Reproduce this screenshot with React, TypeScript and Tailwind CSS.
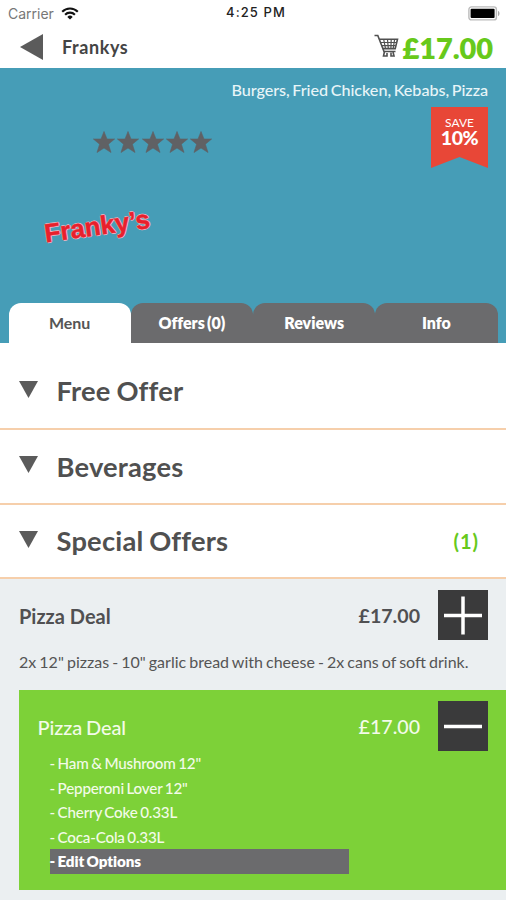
const TABS = ['Menu', 'Offers (0)', 'Reviews', 'Info']

const CATEGORIES = [
  { name: 'Free Offer', row: 'h-[87px] pt-[11px]' },
  { name: 'Beverages', row: 'h-[75px]' },
  { name: 'Special Offers', row: 'h-[74px]', count: 1 },
]

const OPTIONS = ['Ham & Mushroom 12"', 'Pepperoni Lover 12"', 'Cherry Coke 0.33L', 'Coca-Cola 0.33L']

function StatusBar() {
  return (
    <div className="grid h-[25px] grid-cols-3 items-center pl-2 pr-[5px] pt-px font-['Inter',sans-serif] text-[13px]">
      <div className="flex items-center gap-[7px]">
        <span className="text-[14px] text-[#777]">Carrier</span>
        <svg width="18" height="13" viewBox="0 0 18 13" fill="none" stroke="#111" strokeWidth="2.1">
          <path d="M1.2 4.7a11 11 0 0 1 15.6 0" />
          <path d="M4.1 7.7a6.9 6.9 0 0 1 9.8 0" />
          <path d="M9 12.6 6.3 9.9a3.8 3.8 0 0 1 5.4 0z" fill="#111" stroke="none" />
        </svg>
      </div>
      <span className="pl-[3px] text-center font-medium tracking-[1.1px] text-[#222]">4:25 PM</span>
      <svg className="justify-self-end" width="33" height="15" viewBox="0 0 33 15">
        <rect x="0.9" y="0.9" width="27.5" height="13" rx="2.5" fill="#fff" stroke="#bbb" strokeWidth="1.4" />
        <rect x="2.6" y="2.8" width="24" height="9.2" rx="1" fill="#000" />
        <path d="M30 5v5c2-.6 2-4.4 0-5z" fill="#aaa" />
      </svg>
    </div>
  )
}

function CartIcon() {
  return (
    <svg width="25" height="25" viewBox="0 0 25 25" fill="none" stroke="#505050" strokeWidth="1.6">
      <path d="M0.5 1.5h3.3l6.200 16h11.5" />
      <path d="M5.2 5.3h18.3l-2.3 9.300H8.8" />
      <path d="M6.5 8.5h16M7.600 11.600h14M9.700 5.500l1.800 9M13.500 5.500l.8 9M17.200 5.500l-.3 9M20.600 5.500l-1.400 9" strokeWidth="1.2" />
      <path d="M10.5 17.5l-1 4.500h3.500v-3M17 18.500v3.500h3l-1-4" />
    </svg>
  )
}

function Header() {
  return (
    <header className="flex h-[43px] items-center pl-[20px] pr-[13px]">
      <svg width="23" height="26" viewBox="0 0 23 26">
        <path d="M0 13 23 0v26z" fill="#5b5b5b" />
      </svg>
      <h1 className="ml-[19px] pt-px text-[18px] font-bold tracking-[0.6px] text-[#444]">Frankys</h1>
      <div className="ml-auto flex items-center gap-1">
        <CartIcon />
        <span className="pt-px text-[29px] font-extrabold leading-none tracking-[-0.1px] text-[#67c91b]">£17.00</span>
      </div>
    </header>
  )
}

function Hero() {
  return (
    <section className="flex h-[275px] flex-col bg-[#469db7]">
      <p className="mt-[10px] pr-[18px] text-right text-[16.2px] font-medium leading-6 tracking-[-0.05px] text-[#e8f5f8] [word-spacing:-1.4px]">
        Burgers, Fried Chicken, Kebabs, Pizza
      </p>
      <div className="mt-[5px] flex items-start justify-between pl-[93px] pr-[18px]">
        <div className="mt-[24px] flex gap-[2.3px]">
          {[1, 2, 3, 4, 5].map((n) => (
            <svg key={n} width="22" height="22" viewBox="0 0 22 22" fill="#606164" stroke="#606164" strokeWidth="0.6">
              <path d="M11 0.500l3 7.500h7.600l-6.200 5.200 2.600 8.300L11 17l-7 4.500 2.600-8.300L.4 8H8z" />
            </svg>
          ))}
        </div>
        <div className="flex h-[61px] w-[57px] flex-col items-center bg-[#e84737] pt-[9px] text-white [clip-path:polygon(0_0,100%_0,100%_100%,50%_82%,0_100%)]">
          <span className="text-[12px] leading-[13px]">SAVE</span>
          <span className="text-[19.5px] font-black leading-[18px] tracking-[-0.4px]">10%</span>
        </div>
      </div>
      <div className="ml-[44px] mt-[40px] w-[108px] -rotate-[8deg] whitespace-nowrap font-['Liberation_Sans',sans-serif] text-[26px] font-bold leading-[36px] text-[#e8202c] [-webkit-text-stroke:0.5px_#e8202c] [text-shadow:1px_0_#efb9c6,-1px_0_#efb9c6,0_1px_#efb9c6,0_-1px_#efb9c6]">
        Franky’s
      </div>
      <nav className="mx-[8.5px] mt-auto flex h-10">
        {TABS.map((tab, i) => (
          <button
            key={tab}
            className={`flex-1 rounded-t-[12px] pb-px text-[16px] [font-variant-ligatures:none] [word-spacing:-1.5px] ${
              i === 0 ? 'bg-white font-bold text-[#555]' : 'bg-[#6b6b6d] font-extrabold text-white'
            }`}
          >
            {tab}
          </button>
        ))}
      </nav>
    </section>
  )
}

function Category({ name, row, count }: { name: string; row: string; count?: number }) {
  return (
    <div className={`flex items-center border-b-2 border-[#f6cfab] pl-[19px] pr-[27px] ${row}`}>
      <svg className="-mt-1" width="19" height="17" viewBox="0 0 19 17">
        <path d="M0 0h19L9.5 17z" fill="#5b5b5b" />
      </svg>
      <h2 className="ml-[18.5px] pt-px text-[27.3px] font-bold tracking-[0.2px] text-[#505050] [font-variant-ligatures:none] [word-spacing:-1px]">
        {name}
      </h2>
      {count && <span className="ml-auto text-[20px] font-bold tracking-[1px] text-[#67c91b]">({count})</span>}
    </div>
  )
}

function QtyButton({ add }: { add?: boolean }) {
  return (
    <button className="ml-[18px] size-[50px] bg-[#3a3a3b]">
      <svg width="50" height="50" viewBox="0 0 50 50" stroke="#fff" strokeWidth="3.5">
        <path d="M6 25.5h38" />
        {add && <path d="M25 6.5v38" />}
      </svg>
    </button>
  )
}

function Deal() {
  return (
    <section className="flex-1 bg-[#ebeff1] pt-[11px]">
      <div className="flex items-center pl-[19px] pr-[18px] text-[20px] font-bold text-[#505052]">
        <h3 className="pt-px">Pizza Deal</h3>
        <span className="ml-auto pt-px text-[19.6px]">£17.00</span>
        <QtyButton add />
      </div>
      <p className="mt-[10px] whitespace-nowrap pl-[19px] text-[16px] leading-6 text-[#555] [word-spacing:-1px]">
        2x 12" pizzas - 10" garlic bread with cheese - 2x cans of soft drink.
      </p>
      <div className="ml-[19px] mt-[16px] h-[200px] bg-[#7dd138] pt-[11px] text-[#f3fbe9]">
        <div className="flex items-center pl-[18.5px] pr-[18px] text-[20px] font-medium">
          <h3 className="pt-px tracking-[-0.1px] [word-spacing:-1px]">Pizza Deal</h3>
          <span className="ml-auto pt-px text-[19.6px]">£17.00</span>
          <QtyButton />
        </div>
        <ul className="ml-[30.5px] w-[299.5px] text-[15.2px] font-medium leading-[24.5px] tracking-[-0.2px] [word-spacing:-1px]">
          {OPTIONS.map((option) => (
            <li key={option}>- {option}</li>
          ))}
          <li className="bg-[#6b6b6d] font-extrabold tracking-[-0.1px] text-white">- Edit Options</li>
        </ul>
      </div>
    </section>
  )
}

export default function App() {
  return (
    <div className="flex h-[900px] w-[506px] flex-col overflow-hidden bg-white font-['Lato',sans-serif]">
      <StatusBar />
      <Header />
      <Hero />
      {CATEGORIES.map((category) => (
        <Category key={category.name} {...category} />
      ))}
      <Deal />
    </div>
  )
}
